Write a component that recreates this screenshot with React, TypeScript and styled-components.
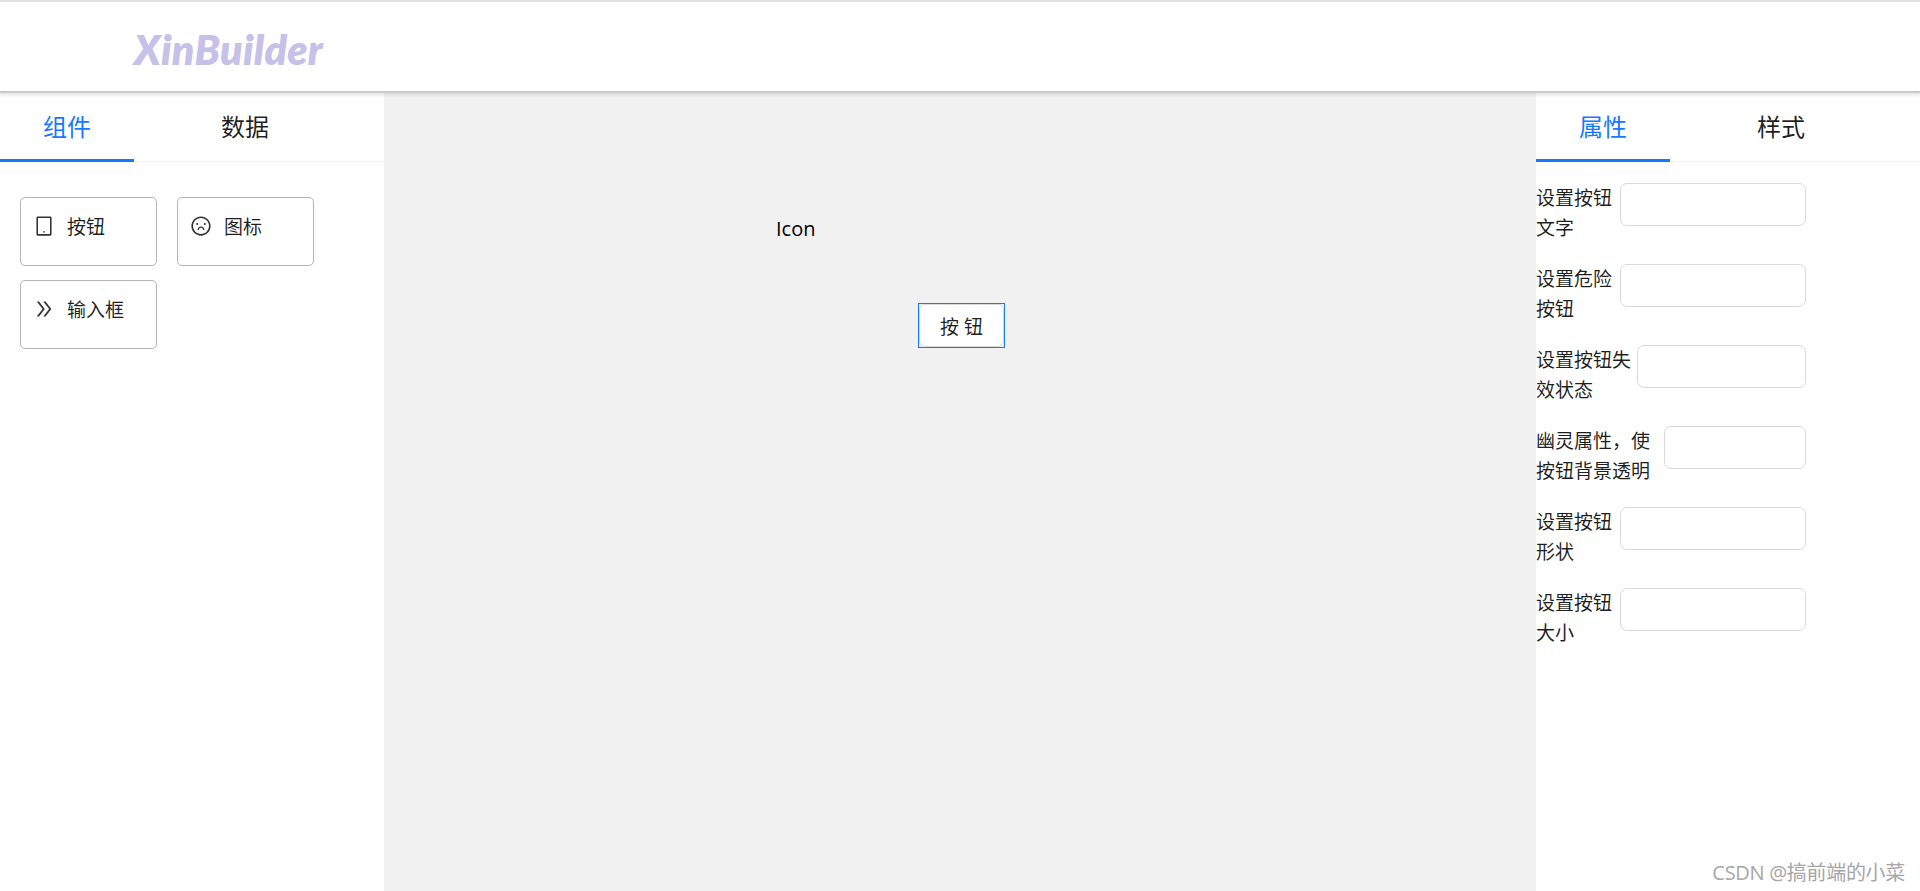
import { ReactNode, useState } from "react";
import styled, { createGlobalStyle } from "styled-components";
import { AiOutlineDoubleRight, AiOutlineFrown, AiOutlineTablet } from "react-icons/ai";

const GlobalStyle = createGlobalStyle`
  html, body {
    margin: 0;
    padding: 0;
    height: 100%;
    overflow: hidden;
  }
  body {
    font-family: "Open Sans", "Noto Sans CJK SC", sans-serif;
    color: rgba(0, 0, 0, 0.88);
  }
`;

const Page = styled.div`
  height: 891px;
  display: flex;
  flex-direction: column;
  background: #fff;
`;

const Header = styled.header`
  height: 89px;
  flex: none;
  border-top: 2px solid #e2e2e2;
  border-bottom: 2px solid #cfcbcb;
  box-shadow: 0 2px 3px rgba(0, 0, 0, 0.12);
  padding-left: 134px;
  display: flex;
  align-items: center;
  background: #fff;
  position: relative;
  z-index: 1;
`;

const Logo = styled.div`
  font-family: Lato, sans-serif;
  font-size: 41px;
  font-weight: 800;
  font-style: italic;
  letter-spacing: 0.3px;
  color: #c5c1e8;
  margin-top: 5px;
`;

const Body = styled.main`
  flex: 1;
  display: flex;
  min-height: 0;
`;

const Sider = styled.aside`
  width: 384px;
  flex: none;
  background: #fff;
`;

const TabBar = styled.div`
  height: 69px;
  display: flex;
  gap: 44px;
  border-bottom: 1px solid #f0f0f0;
  box-sizing: border-box;
`;

const Tab = styled.div<{ $active?: boolean }>`
  width: 134px;
  height: 69px;
  box-sizing: border-box;
  padding-top: 16px;
  text-align: center;
  font-size: 24px;
  line-height: 36px;
  color: ${(p) => (p.$active ? "#1677ff" : "rgba(0, 0, 0, 0.88)")};
  border-bottom: 3px solid ${(p) => (p.$active ? "#1677ff" : "transparent")};
`;

const Palette = styled.div`
  display: grid;
  grid-template-columns: repeat(2, 137px);
  grid-auto-rows: 69px;
  gap: 14px 20px;
  padding: 35px 20px 0;
`;

const PaletteCard = styled.div`
  box-sizing: border-box;
  border: 1px solid #b8b4b4;
  border-radius: 5px;
  padding: 14px 0 0 12px;
  display: flex;
  align-items: flex-start;
  gap: 12px;
  font-size: 19px;
  line-height: 30px;
  svg {
    width: 22px;
    height: 22px;
    margin-top: 3px;
    color: #333;
  }
`;

const Canvas = styled.section`
  flex: 1;
  background: #f1f1f1;
  position: relative;
`;

const CanvasIcon = styled.div`
  position: absolute;
  left: 392px;
  top: 121px;
  font-size: 20px;
  line-height: 30px;
  color: #000;
`;

const SelectedFrame = styled.div`
  position: absolute;
  left: 534px;
  top: 210px;
  width: 87px;
  height: 45px;
  box-sizing: border-box;
  border: 1px solid #1677ff;
  display: flex;
`;

const CanvasButton = styled.button`
  flex: 1;
  margin: 0;
  padding: 0;
  background: #fff;
  border: 1px solid #d9d9d9;
  border-radius: 6px;
  font-family: inherit;
  font-size: 19px;
  color: rgba(0, 0, 0, 0.88);
  letter-spacing: 5px;
  text-indent: 5px;
`;

const PropsForm = styled.form`
  display: flex;
  flex-direction: column;
  gap: 21px;
  padding-top: 21px;
`;

const FormRow = styled.div`
  display: flex;
  align-items: flex-start;
`;

const FieldLabel = styled.label<{ $width: number }>`
  width: ${(p) => p.$width}px;
  flex: none;
  font-size: 19px;
  line-height: 30px;
`;

const FieldInput = styled.input<{ $width: number }>`
  width: ${(p) => p.$width}px;
  height: 43px;
  box-sizing: border-box;
  border: 1px solid #d9d9d9;
  border-radius: 7px;
  background: #fff;
  outline: none;
`;

const Watermark = styled.div`
  position: absolute;
  right: 15px;
  bottom: 7px;
  font-size: 20px;
  line-height: 22px;
  color: #a6a6a6;
  letter-spacing: -0.3px;
`;

type Field = { lines: [string, string]; labelWidth: number };

const fields: Field[] = [
  { lines: ["设置按钮", "文字"], labelWidth: 84 },
  { lines: ["设置危险", "按钮"], labelWidth: 84 },
  { lines: ["设置按钮失", "效状态"], labelWidth: 101 },
  { lines: ["幽灵属性，使", "按钮背景透明"], labelWidth: 128 },
  { lines: ["设置按钮", "形状"], labelWidth: 84 },
  { lines: ["设置按钮", "大小"], labelWidth: 84 },
];

const paletteItems: { icon: ReactNode; name: string }[] = [
  { icon: <AiOutlineTablet />, name: "按钮" },
  { icon: <AiOutlineFrown />, name: "图标" },
  { icon: <AiOutlineDoubleRight />, name: "输入框" },
];

const Tabs = ({ names }: { names: string[] }) => {
  const [active, setActive] = useState(0);
  return (
    <TabBar>
      {names.map((name, i) => (
        <Tab key={name} $active={i === active} onClick={() => setActive(i)}>
          {name}
        </Tab>
      ))}
    </TabBar>
  );
};

const App = () => {
  return (
    <Page>
      <GlobalStyle />
      <Header>
        <Logo>XinBuilder</Logo>
      </Header>
      <Body>
        <Sider>
          <Tabs names={["组件", "数据"]} />
          <Palette>
            {paletteItems.map((item) => (
              <PaletteCard key={item.name}>
                {item.icon}
                <span>{item.name}</span>
              </PaletteCard>
            ))}
          </Palette>
        </Sider>
        <Canvas>
          <CanvasIcon>Icon</CanvasIcon>
          <SelectedFrame>
            <CanvasButton type="button">按钮</CanvasButton>
          </SelectedFrame>
        </Canvas>
        <Sider>
          <Tabs names={["属性", "样式"]} />
          <PropsForm>
            {fields.map((field, i) => (
              <FormRow key={i}>
                <FieldLabel $width={field.labelWidth}>
                  {field.lines[0]}
                  <br />
                  {field.lines[1]}
                </FieldLabel>
                <FieldInput $width={270 - field.labelWidth} />
              </FormRow>
            ))}
          </PropsForm>
        </Sider>
      </Body>
      <Watermark>CSDN @搞前端的小菜</Watermark>
    </Page>
  );
};

export default App;
